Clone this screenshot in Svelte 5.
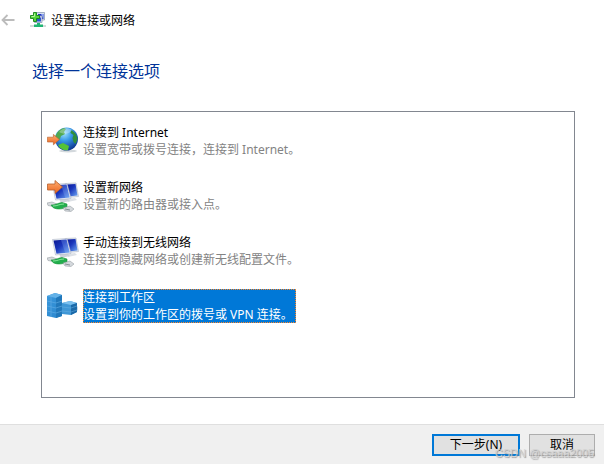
<script>
    const options = [
        { id: "internet", icon: "globe", title: "连接到 Internet", note: "设置宽带或拨号连接，连接到 Internet。" },
        { id: "network", icon: "router", title: "设置新网络", note: "设置新的路由器或接入点。" },
        { id: "wireless", icon: "screens", title: "手动连接到无线网络", note: "连接到隐藏网络或创建新无线配置文件。" },
        { id: "workplace", icon: "servers", title: "连接到工作区", note: "设置到你的工作区的拨号或 VPN 连接。" }
    ]

    let selected = $state("workplace")
</script>

<svg class="defs" aria-hidden="true">
    <defs>
        <linearGradient id="orange" x1="0" y1="0" x2="0" y2="1">
            <stop offset="0" stop-color="#ffae70" />
            <stop offset="1" stop-color="#ea6420" />
        </linearGradient>
        <radialGradient id="sea" cx=".4" cy=".25" r=".8">
            <stop offset="0" stop-color="#9fe2fc" />
            <stop offset=".4" stop-color="#3a9be8" />
            <stop offset="1" stop-color="#0a2f8a" />
        </radialGradient>
        <linearGradient id="screen" x1="0" y1="0" x2="1" y2="1">
            <stop offset="0" stop-color="#0a1590" />
            <stop offset=".45" stop-color="#1a36bc" />
            <stop offset="1" stop-color="#6fa8f4" />
        </linearGradient>
        <linearGradient id="tower" x1="0" y1="0" x2="1" y2="1">
            <stop offset="0" stop-color="#3a97dc" />
            <stop offset="1" stop-color="#2a86cc" />
        </linearGradient>
    </defs>
</svg>

{#snippet arrow()}
    <path d="M.5 4h7.500v-3.500l7.500 6.500-7.500 6.500v-3.500h-7.500z" fill="url(#orange)" stroke="#b5602f" stroke-width=".8" />
{/snippet}

{#snippet monitors()}
    <path d="M20 19l8-1 2 2-9 2z" fill="#dde1e6" />
    <path d="M18 3.500l11-.5 2.500 13.500-11 1z" fill="#e4e9f1" stroke="#a9b2c2" stroke-width=".6" />
    <path d="M19 4.500l9.500-.5 2 11.500-9 1z" fill="url(#screen)" />
    <path d="M12 19l8-1 3 3-9 2z" fill="#cdd2da" />
    <path d="M5.500 4.500l14.500-1 4 15-15.500 1.500z" fill="#eef2f8" stroke="#a9b2c2" stroke-width=".6" />
    <path d="M6.500 5.500l13-1 3.200 13-13.200 1.300z" fill="url(#screen)" />
    <path d="M14 5l5.500-.5 3.200 13-4.500.5z" fill="#9cc4ff" opacity=".25" />
    <path d="M0 23l5-1 5 2-4 2.500-5-1z" fill="#d5d9dd" stroke="#8b9399" stroke-width=".5" />
    <path d="M4 25c5 0 7-2 11-2.500l5 1.500v3c-3 2-10 3-14 .5z" fill="#23ae4d" stroke="#159438" stroke-width=".6" />
    <path d="M6 26c5 0 6-2 11-2" fill="none" stroke="#87e79c" />
    <path d="M16 28l7-2 4 3-3 2.500-6-.5z" fill="#d5d9dd" stroke="#8b9399" stroke-width=".5" />
    <path d="M18 29l5 1" stroke="#747d84" stroke-width=".8" />
{/snippet}

<div class="wizard">
    <header>
        <button class="back" aria-label="返回" disabled>
            <svg width="14" height="14" viewBox="0 0 14 14">
                <path d="M6.500 2l-5 5 5 5M1.500 7h12" fill="none" stroke="#bcbcbc" stroke-width="1.800" />
            </svg>
        </button>
        <svg width="16" height="16" viewBox="0 0 16 16" aria-hidden="true">
            <path d="M6.500.5h8v7.500h-8z" fill="#d8e0f0" stroke="#8f9db5" stroke-width=".8" />
            <path d="M8 2h5.500v5h-5.500z" fill="#2233c0" />
            <path d="M11 2h2.500v5z" fill="#8ba5f5" />
            <path d="M4.500 4h7.500v6.500h-7.500z" fill="#d8e0f0" stroke="#8f9db5" stroke-width=".8" />
            <path d="M6 5.500h5v4h-5z" fill="#2d55d0" />
            <path d="M7 11h3v1.500h3v2.500h-9v-2.500h3z" fill="#20b573" />
            <path d="M0 14h16" stroke="#a9b6b5" />
            <path d="M4 14h9" stroke="#20b573" stroke-width="2" />
            <path d="M3.500.5h3v3h3v3h-3v3h-3v-3h-3v-3h3z" fill="#55d63c" stroke="#16841a" stroke-width=".9" />
            <path d="M4.500 1.500v3h-3" fill="none" stroke="#b4f79b" />
        </svg>
        <span>设置连接或网络</span>
    </header>

    <main>
        <h1>选择一个连接选项</h1>
        <div class="options">
            {#each options as option (option.id)}
                <button
                    class="option"
                    class:selected={selected === option.id}
                    aria-pressed={selected === option.id}
                    onclick={() => selected = option.id}
                >
                    <svg width="32" height="32" viewBox="0 0 32 32" aria-hidden="true">
                        {#if option.icon === "globe"}
                            <ellipse cx="21" cy="26" rx="9" ry="1.500" fill="#d3d8dc" />
                            <circle cx="19.500" cy="14" r="11.500" fill="url(#sea)" />
                            <path d="M9 10c1-3 4-6 8-7l2 1-2 3 1 2-4 2-1 3-3 2-2-1c0-2 0-4 1-5z" fill="#4fa850" />
                            <path d="M24 5c4 2 6 5 6.500 9l-2 5-2-2-1-4 1-3-3-2z" fill="#2f8f3d" />
                            <path d="M11 20l5-2 6 3-1 4c-4 1-8-1-10-5z" fill="#55c236" />
                            <path d="M12 7c3-4 9-5 13-2-2 4-8 5-13 2z" fill="#fff" opacity=".3" />
                            <g transform="translate(0 9) scale(.8)">{@render arrow()}</g>
                        {:else if option.icon === "servers"}
                            <path d="M14 24l14-1 3-3v-4l-8 6z" fill="#cfdbe5" />
                            <path d="M0 6l8-3 7 2v21l-6 2-9-2z" fill="url(#tower)" />
                            <path d="M0 6l8-3 7 2-6 3z" fill="#64b2e8" />
                            <path d="M9 8l6-3v21l-6 2z" fill="#2178bb" />
                            <path d="M0 11l9 2 6-2M0 16l9 2 6-2M0 21l9 2 6-2M4 7v20" fill="none" stroke="#64b0e6" stroke-width=".6" />
                            <path d="M15 13l8-2 7 2v9l-6 3-9-1z" fill="#3f97d6" />
                            <path d="M15 13l8-2 7 2-6 2z" fill="#7cc0ee" />
                            <path d="M24 15l6-2v9l-6 3z" fill="#1b69a8" />
                            <path d="M15 17l9 1 6-2M15 21l9 1 6-2" fill="none" stroke="#68b0e2" stroke-width=".5" />
                        {:else}
                            {@render monitors()}
                            {#if option.icon === "router"}
                                {@render arrow()}
                            {/if}
                        {/if}
                    </svg>
                    <span class="label">
                        <span class="title">{option.title}</span>
                        <span class="note">{option.note}</span>
                    </span>
                </button>
            {/each}
        </div>
    </main>

    <footer>
        <button class="push primary">下一步(N)</button>
        <button class="push">取消</button>
        <span class="watermark">CSDN @csaaa2005</span>
    </footer>
</div>

<style>
    :global(body) {
        margin: 0;
        background: #fff;
    }
    .defs {
        position: absolute;
        width: 0;
        height: 0;
    }
    .wizard {
        display: flex;
        flex-direction: column;
        min-height: 100vh;
        font-family: "Noto Sans", "Noto Sans CJK SC", sans-serif;
        font-size: 12px;
        color: #000;
    }
    button {
        font: inherit;
        color: inherit;
        border-radius: 0;
    }

    header {
        display: flex;
        align-items: center;
        height: 40px;
        padding-left: 1px;
    }
    .back {
        display: flex;
        margin-right: 15px;
        padding: 0;
        border: none;
        background: none;
    }
    header span {
        margin-left: 5px;
    }

    main {
        display: flex;
        flex: 1;
        flex-direction: column;
        padding: 20px 29px 26px 32px;
    }
    h1 {
        margin: 0 0 29px;
        font-size: 16px;
        font-weight: 400;
        line-height: 22px;
        color: #003399;
    }
    .options {
        display: flex;
        flex: 1;
        flex-direction: column;
        align-items: flex-start;
        gap: 21px;
        margin-left: 9px;
        padding: 12px 5px;
        border: 1px solid #828790;
    }
    .option {
        display: flex;
        align-items: center;
        gap: 4px;
        padding: 0;
        border: none;
        background: none;
        text-align: left;
        line-height: 17px;
        white-space: nowrap;
    }
    .label {
        display: flex;
        flex-direction: column;
        padding-right: 3px;
    }
    .note {
        color: #838383;
    }
    .selected .label {
        background: #0078d7;
        color: #fff;
        outline: 1px dotted #ff8728;
        outline-offset: -1px;
    }
    .selected .note {
        color: #fff;
    }

    footer {
        position: relative;
        display: flex;
        justify-content: flex-end;
        gap: 9px;
        padding: 9px 9px 8px;
        border-top: 1px solid #dfdfdf;
        background: #f0f0f0;
    }
    .push {
        box-sizing: border-box;
        width: 66px;
        height: 22px;
        padding: 0;
        border: 1px solid #adadad;
        background: #e1e1e1;
        line-height: 18px;
    }
    .primary {
        width: 88px;
        border: 2px solid #0078d7;
    }
    .watermark {
        position: absolute;
        right: 10px;
        bottom: 3px;
        font-family: "Liberation Sans", sans-serif;
        font-size: 11px;
        line-height: 16px;
        color: #d0d0d0;
        text-shadow: 1px 1px 1px #888;
        opacity: .8;
        pointer-events: none;
    }
</style>
